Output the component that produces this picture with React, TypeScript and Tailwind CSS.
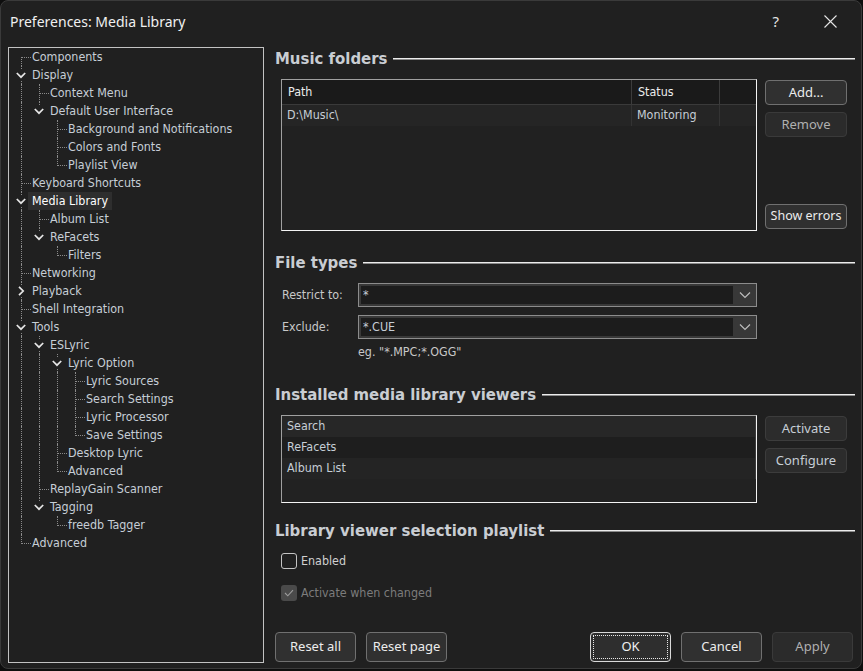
import React from "react";

type TNode = { label: string; children?: TNode[]; collapsed?: boolean; selected?: boolean };

const tree: TNode[] = [
  { label: "Components" },
  {
    label: "Display",
    children: [
      { label: "Context Menu" },
      {
        label: "Default User Interface",
        children: [
          { label: "Background and Notifications" },
          { label: "Colors and Fonts" },
          { label: "Playlist View" },
        ],
      },
    ],
  },
  { label: "Keyboard Shortcuts" },
  {
    label: "Media Library",
    selected: true,
    children: [{ label: "Album List" }, { label: "ReFacets", children: [{ label: "Filters" }] }],
  },
  { label: "Networking" },
  { label: "Playback", collapsed: true },
  { label: "Shell Integration" },
  {
    label: "Tools",
    children: [
      {
        label: "ESLyric",
        children: [
          {
            label: "Lyric Option",
            children: [
              { label: "Lyric Sources" },
              { label: "Search Settings" },
              { label: "Lyric Processor" },
              { label: "Save Settings" },
            ],
          },
          { label: "Desktop Lyric" },
          { label: "Advanced" },
        ],
      },
      { label: "ReplayGain Scanner" },
      { label: "Tagging", children: [{ label: "freedb Tagger" }] },
    ],
  },
  { label: "Advanced" },
];

const TAHOMA = "font-['DejaVu_Sans_Condensed','DejaVu_Sans',sans-serif]";
const SEGOE = "font-['Noto_Sans','Open_Sans',sans-serif]";

function Chevron({ open }: { open: boolean }) {
  return (
    <svg
      className="absolute left-[2px] top-[4px]"
      width="10"
      height="10"
      viewBox="0 0 10 10"
      fill="none"
      stroke="#e6e6e6"
      strokeWidth="1.7"
    >
      {open ? <path d="M0.8 3 L5 7.2 L9.2 3" /> : <path d="M3 0.8 L7.2 5 L3 9.2" />}
    </svg>
  );
}

function renderTree(nodes: TNode[], level: number, anc: boolean[]): React.ReactNode[] {
  const out: React.ReactNode[] = [];
  nodes.forEach((n, i) => {
    const isLast = i === nodes.length - 1;
    const isFirstRoot = level === 0 && i === 0;
    const hasKids = !!n.children || !!n.collapsed;
    out.push(
      <div key={`${level}-${n.label}-${i}-${out.length}`} className="flex h-[18px] items-stretch">
        {anc.map((hasNext, a) => (
          <div key={a} className="relative w-[18px] shrink-0">
            {hasNext && (
              <div className="absolute left-[7px] top-0 bottom-0 border-l border-dotted border-[#8a8a8a]" />
            )}
          </div>
        ))}
        <div className="relative w-[14px] shrink-0">
          {hasKids ? (
            <>
              {!isFirstRoot && (
                <div className="absolute left-[7px] top-0 h-[3px] border-l border-dotted border-[#8a8a8a]" />
              )}
              {!isLast && (
                <div className="absolute left-[7px] top-[15px] bottom-0 border-l border-dotted border-[#8a8a8a]" />
              )}
              <Chevron open={!n.collapsed} />
            </>
          ) : (
            <>
              <div
                className={
                  "absolute left-[7px] border-l border-dotted border-[#8a8a8a] " +
                  (isFirstRoot ? "top-[9px] " : "top-0 ") +
                  (isLast ? "h-[10px]" : "bottom-0")
                }
              />
              <div className="absolute left-[8px] top-[9px] w-[9px] border-t border-dotted border-[#8a8a8a]" />
            </>
          )}
        </div>
        <div
          className={
            "relative flex items-center px-[4px] whitespace-nowrap " +
            (n.selected ? "bg-[#2e2e2e] text-white" : "text-[#c6ced6]")
          }
        >
          {n.label}
        </div>
      </div>
    );
    if (n.children) {
      out.push(...renderTree(n.children, level + 1, [...anc, !isLast]));
    }
  });
  return out;
}

function Heading({ text }: { text: string }) {
  return (
    <div className="flex h-[24px] items-center">
      <span className={`${TAHOMA} text-[16.6px] font-bold text-[#c9cdd2]`}>{text}</span>
      <div className="ml-[6px] flex-1 flex flex-col">
        <div className="h-[1px] bg-[#ececec]" />
        <div className="h-[1px] bg-[#8a8a8a]" />
      </div>
    </div>
  );
}

function Btn({
  children,
  variant = "normal",
  className = "",
}: {
  children: React.ReactNode;
  variant?: "normal" | "flat" | "disabled";
  className?: string;
}) {
  const styles =
    variant === "normal"
      ? "bg-[#303030] border-[#707070] text-[#ececec]"
      : variant === "flat"
      ? "bg-[#2c2c2c] border-[#3c3c3c] text-[#c6ced6]"
      : "bg-[#2b2b2b] border-[#3a3a3a] text-[#b0b0b0]";
  return (
    <div
      className={`flex items-center justify-center rounded-[4px] border ${styles} ${SEGOE} text-[13px] ${className}`}
    >
      {children}
    </div>
  );
}

function Combo({ value }: { value: string }) {
  return (
    <div className="flex h-[24px] w-[399px] border border-[#8c8c8c] bg-[#383838]">
      <div className="my-[2px] ml-[2px] flex flex-1 items-center bg-[#1c1c1c] pl-[2px] text-[#c6ced6]">
        {value}
      </div>
      <div className="flex w-[23px] items-center justify-center">
        <svg width="12" height="8" viewBox="0 0 12 8" fill="none" stroke="#bdbdbd" strokeWidth="1.2">
          <path d="M1 1.5 L6 6.5 L11 1.5" />
        </svg>
      </div>
    </div>
  );
}

export default function App() {
  return (
    <div className={`h-[671px] w-[863px] overflow-hidden bg-[#0e0e0e] ${TAHOMA} text-[12.4px]`}>
      <div className="flex h-[669px] w-[862px] flex-col rounded-[8px] border border-[#3a3a3a] bg-[#202020]">
        {/* Title bar */}
        <div className="flex h-[40px] shrink-0 items-center pl-[9px]">
          <span className={`${SEGOE} text-[14px] text-[#f0f0f0]`}>Preferences: Media Library</span>
          <div className="ml-auto flex items-center">
            <span className={`${SEGOE} text-[15px] text-[#e6e6e6] mr-[45px]`}>?</span>
            <svg width="13" height="13" viewBox="0 0 13 13" stroke="#e6e6e6" strokeWidth="1.1" className="mr-[24px]">
              <path d="M0.5 0.5 L12.5 12.5 M12.5 0.5 L0.5 12.5" />
            </svg>
          </div>
        </div>

        {/* Body */}
        <div className="flex pl-[7px] pt-[6px]">
          {/* Tree */}
          <div className="h-[616px] w-[256px] shrink-0 border border-[#c2c2c2] pl-[5px]">
            {renderTree(tree, 0, [])}
          </div>

          {/* Right */}
          <div className="ml-[11px] flex w-[580px] flex-col">
            <Heading text="Music folders" />
            <div className="mt-[8px] flex pl-[6px]">
              <div className="flex h-[152px] w-[476px] flex-col border border-t-[#a0a0a0] border-l-[#a0a0a0] border-b-[#f4f4f4] border-r-[#f4f4f4] bg-[#212121]">
                <div className="flex h-[25px] border-b border-[#3a3a3a] bg-[#1a1a1a] text-[#ececec]">
                  <div className="flex w-[350px] items-center border-r border-[#3c3c3c] pl-[6px]">Path</div>
                  <div className="flex w-[88px] items-center border-r border-[#3c3c3c] pl-[6px]">Status</div>
                </div>
                <div className="flex h-[21px] bg-[#252525] text-[#c6ced6]">
                  <div className="flex w-[350px] items-center border-r border-[#333] pl-[5px]">D:\Music\</div>
                  <div className="flex w-[88px] items-center border-r border-[#333] pl-[5px]">Monitoring</div>
                </div>
              </div>
              <div className="ml-[8px] flex w-[82px] flex-col pt-[1px]">
                <Btn className="h-[25px]">Add...</Btn>
                <Btn className="mt-[7px] h-[25px]" variant="disabled">Remove</Btn>
                <Btn className={`mt-[67px] h-[25px] ${TAHOMA} !text-[12.5px] border-[#7a7a7a]`}>Show errors</Btn>
              </div>
            </div>

            <div className="mt-[20px]">
              <Heading text="File types" />
            </div>
            <div className="mt-[8px] flex h-[24px] items-center">
              <div className="w-[83px] pl-[7px] text-[#c8c8c8]">Restrict to:</div>
              <Combo value="*" />
            </div>
            <div className="mt-[8px] flex h-[24px] items-center">
              <div className="w-[83px] pl-[7px] text-[#c8c8c8]">Exclude:</div>
              <Combo value="*.CUE" />
            </div>
            <div className="mt-[5px] flex h-[16px] items-center pl-[83px] text-[#c8c8c8]">eg. "*.MPC;*.OGG"</div>

            <div className="mt-[23px]">
              <Heading text="Installed media library viewers" />
            </div>
            <div className="mt-[8px] flex pl-[6px]">
              <div className="flex h-[88px] w-[476px] flex-col border border-t-[#a0a0a0] border-l-[#a0a0a0] border-b-[#f4f4f4] border-r-[#f4f4f4] bg-[#222222] text-[#c6ced6]">
                <div className="flex h-[21px] items-center border-r border-[#3a3a3a] bg-[#272727] pl-[5px]">Search</div>
                <div className="flex h-[21px] items-center border-r border-[#3a3a3a] bg-[#1e1e1e] pl-[5px]">ReFacets</div>
                <div className="flex h-[21px] items-center border-r border-[#3a3a3a] bg-[#242424] pl-[5px]">Album List</div>
              </div>
              <div className="ml-[8px] flex w-[82px] flex-col pt-[1px]">
                <Btn className="h-[25px]" variant="flat">Activate</Btn>
                <Btn className="mt-[7px] h-[25px]" variant="flat">Configure</Btn>
              </div>
            </div>

            <div className="mt-[16px]">
              <Heading text="Library viewer selection playlist" />
            </div>
            <div className="mt-[10px] flex h-[16px] items-center pl-[6px]">
              <div className="h-[16px] w-[16px] rounded-[3px] border border-[#c4c4c4]" />
              <span className="ml-[4px] text-[#d0d0d0]">Enabled</span>
            </div>
            <div className="mt-[16px] flex h-[16px] items-center pl-[6px]">
              <div className="flex h-[16px] w-[16px] items-center justify-center rounded-[3px] bg-[#4a4a4a]">
                <svg width="10" height="8" viewBox="0 0 10 8" fill="none" stroke="#9c9c9c" strokeWidth="1.1">
                  <path d="M1 4 L3.8 6.8 L9 1.2" />
                </svg>
              </div>
              <span className="ml-[4px] text-[#7c7c7c]">Activate when changed</span>
            </div>

            <div className="mt-[31px] flex pr-[2px]">
              <Btn className="h-[30px] w-[81px]">Reset all</Btn>
              <Btn className="ml-[10px] h-[30px] w-[81px]">Reset page</Btn>
              <div className="relative ml-auto flex h-[30px] w-[81px] items-center justify-center rounded-[4px] border border-[#d8d8d8] bg-[#2e2e2e]">
                <div className="absolute inset-[2px] border border-dotted border-[#e8e8e8]" />
                <span className={`${SEGOE} text-[13px] text-[#f0f0f0]`}>OK</span>
              </div>
              <Btn className="ml-[10px] h-[30px] w-[81px]">Cancel</Btn>
              <Btn className="ml-[10px] h-[30px] w-[81px]" variant="disabled">Apply</Btn>
            </div>
          </div>
        </div>
      </div>
    </div>
  );
}
